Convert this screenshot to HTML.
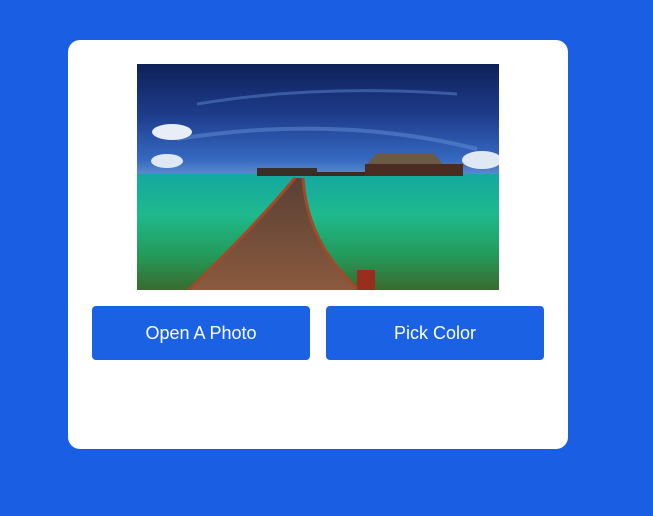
<!DOCTYPE html>
<html><head><meta charset="utf-8"><style>
html,body{margin:0;padding:0}
body{width:653px;height:516px;background:#1a5fe3;position:relative;overflow:hidden;font-family:"Liberation Sans",sans-serif}
.card{position:absolute;left:68px;top:40px;width:500px;height:409px;background:#fff;border-radius:12px}
.img{position:absolute;left:137px;top:64px;width:362px;height:226px}
.btn{position:absolute;top:306px;width:218px;height:54px;background:#1a62e3;border-radius:4px;color:#fff;font-size:18px;text-align:center;line-height:54px}
</style></head><body>
<div class="card"></div>
<svg class="img" viewBox="0 0 362 226" preserveAspectRatio="none">
<defs>
<linearGradient id="sky" x1="0" y1="0" x2="0" y2="1">
<stop offset="0" stop-color="#0e2158"/><stop offset="0.45" stop-color="#1e3c8c"/><stop offset="0.85" stop-color="#3569c0"/><stop offset="1" stop-color="#5d8fd0"/></linearGradient>
<linearGradient id="sea" x1="0" y1="0" x2="0" y2="1">
<stop offset="0" stop-color="#14a8a0"/><stop offset="0.35" stop-color="#1eb98c"/><stop offset="0.7" stop-color="#239a5a"/><stop offset="1" stop-color="#3a6a2e"/></linearGradient>
<linearGradient id="wood" x1="0" y1="0" x2="0" y2="1">
<stop offset="0" stop-color="#5a4035"/><stop offset="1" stop-color="#8a5a3e"/></linearGradient>
</defs>
<rect width="362" height="112" fill="url(#sky)"/>
<path d="M60 40 Q180 20 320 30" stroke="#5a86d0" stroke-width="3" fill="none" opacity=".5"/>
<path d="M40 75 Q200 50 340 85" stroke="#6a96dc" stroke-width="4" fill="none" opacity=".45"/>
<ellipse cx="35" cy="68" rx="20" ry="8" fill="#e8eef8"/>
<ellipse cx="30" cy="97" rx="16" ry="7" fill="#e0e8f4"/>
<ellipse cx="345" cy="96" rx="20" ry="9" fill="#e0e8f4"/>
<rect y="110" width="362" height="116" fill="url(#sea)"/>
<rect x="120" y="104" width="60" height="8" fill="#3a2e28"/>
<rect x="175" y="108" width="60" height="4" fill="#3a2a24"/>
<polygon points="240,89 296,89 306,100 230,100" fill="#6b5a48"/>
<rect x="228" y="100" width="98" height="12" fill="#4a2c22"/>
<path d="M158 114 L166 114 Q170 180 222 226 L50 226 Q120 160 158 114Z" fill="url(#wood)"/>
<path d="M158 114 Q120 160 52 226" stroke="#a04a2a" stroke-width="3" fill="none"/>
<path d="M166 114 Q170 180 222 226" stroke="#a04a2a" stroke-width="3" fill="none"/>
<rect x="220" y="206" width="18" height="20" fill="#9a2e1e"/>
</svg>
<div class="btn" style="left:92px">Open A Photo</div>
<div class="btn" style="left:326px">Pick Color</div>
</body></html>
